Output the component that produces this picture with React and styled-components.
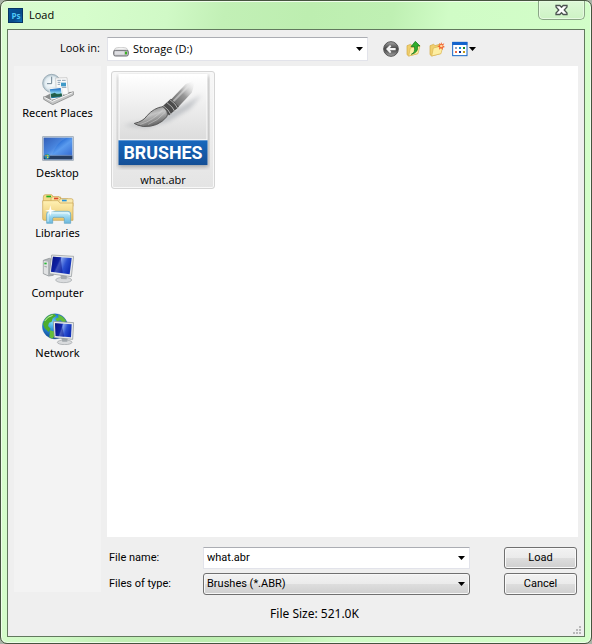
import React, { useState } from "react";
import styled, { createGlobalStyle } from "styled-components";

const GlobalStyle = createGlobalStyle`
  *, *::before, *::after { box-sizing: border-box; }
  body {
    margin: 0;
    background: #a9b3a7;
    font: 11px/16px "Open Sans", "Noto Sans", sans-serif;
    color: #000;
  }
  button, input, select { font: inherit; color: inherit; margin: 0; }
`;

const Window = styled.div`
  min-height: 100vh;
  display: flex;
  flex-direction: column;
  padding: 0 6px 6px;
  border: 1px solid #46543f;
  border-radius: 7px;
  background: linear-gradient(100deg, #d9fbd0 0%, #d6fdcc 12%, #d0f9c6 24%, #c2f0b6 32%, #bdeeb0 44%, #bff0b3 56%, #d0fcc6 64%, #d4ffca 100%);
  box-shadow: inset 0 0 0 1px #effdeb;
`;

const TitleBar = styled.header`
  display: flex;
  align-items: flex-start;
  height: 28px;
`;

const TitleLabel = styled.h1`
  flex: 1;
  display: flex;
  gap: 6px;
  align-items: center;
  margin: 0;
  padding: 6px 0 0 1px;
  font-size: 11px;
  line-height: 16px;
  font-weight: 400;
`;

const CloseButton = styled.button`
  width: 47px;
  height: 19px;
  padding: 0;
  display: grid;
  place-items: center;
  border: 1px solid #8aa586;
  border-top: 0;
  border-radius: 0 0 5px 5px;
  background: linear-gradient(#ddf8d7, #cdf3c4);
  box-shadow: inset 0 0 0 1px #e6fbe1;
`;

const Client = styled.main`
  flex: 1;
  display: grid;
  grid-template-columns: 87px minmax(0, 1fr);
  grid-template-rows: 36px minmax(0, 1fr) auto;
  column-gap: 6px;
  padding: 0 6px;
  border: 1px solid #62795e;
  background: #efefef;
`;

const LookLabel = styled.label`
  align-self: center;
  text-align: right;
  padding-right: 1px;
`;

const Toolbar = styled.div`
  display: flex;
  align-items: center;
  padding: 3px 0 1px;
`;

const ComboBox = styled.div`
  position: relative;
  display: flex;
  flex: 1;
  min-width: 0;
  height: ${(p) => p.$height || 22}px;
`;

const ComboSelect = styled.select`
  appearance: none;
  width: 100%;
  border: 1px solid #e2e3ea;
  border-top-color: #abadb3;
  border-radius: 0;
  padding: 0 20px 0 25px;
  background: #fff;
`;

const TypeSelect = styled(ComboSelect)`
  padding: 0 20px 0 3px;
  border: 1px solid #707070;
  border-radius: 3px;
  background: linear-gradient(#f2f2f2, #ebebeb 48%, #dddddd 52%, #cfcfcf);
  box-shadow: inset 0 0 0 1px #f7f7f7;
`;

const NameInput = styled.input`
  width: 100%;
  border: 1px solid #e2e3ea;
  border-top-color: #abadb3;
  padding: 0 20px 0 3px;
  background: #fff;
`;

const LeadIcon = styled.span`
  position: absolute;
  left: 6px;
  top: 10px;
  line-height: 0;
  pointer-events: none;
`;

const ArrowSlot = styled.span`
  position: absolute;
  right: 5px;
  top: 0;
  bottom: 0;
  display: flex;
  align-items: center;
  pointer-events: none;
`;

const Tools = styled.div`
  display: flex;
  gap: 7px;
  padding: 0 102px 0 15px;
`;

const ToolButton = styled.button`
  display: flex;
  align-items: center;
  gap: 1px;
  padding: 0;
  border: 0;
  background: none;
`;

const Places = styled.nav`
  grid-row: 2 / 4;
  margin-bottom: 44px;
  padding-top: 7px;
  background: #f3f3f3;
  display: flex;
  flex-direction: column;
  font-family: "Noto Sans", "Open Sans", sans-serif;
`;

const Place = styled.button`
  height: 60px;
  padding: 0;
  border: 0;
  background: none;
  display: flex;
  flex-direction: column;
  align-items: center;
  white-space: nowrap;
`;

const FileList = styled.section`
  background: #fff;
  padding: 5px 4px;
`;

const FileCard = styled.button`
  width: 104px;
  height: 118px;
  display: flex;
  flex-direction: column;
  align-items: center;
  gap: 2px;
  padding: 1px 0 0;
  border: 1px solid #d5d5d5;
  border-radius: 3px;
  background: linear-gradient(#f8f8f8, #e4e4e4);
  box-shadow: inset 0 0 0 1px #f8f8f8;
`;

const Form = styled.form`
  display: grid;
  grid-template-columns: 94px minmax(0, 1fr) 73px;
  grid-template-rows: 22px 22px;
  row-gap: 4px;
  align-items: center;
  padding: 10px 1px 0 2px;
  font-family: Roboto, "Liberation Sans", sans-serif;
`;

const Field = styled.div`
  display: flex;
  margin-right: 34px;
`;

const PushButton = styled.button`
  height: 22px;
  padding: 0;
  border: 1px solid #707070;
  border-radius: 3px;
  background: linear-gradient(#f2f2f2, #ebebeb 48%, #dddddd 52%, #cfcfcf);
  box-shadow: inset 0 0 0 1px #fafafa;
`;

const Status = styled.footer`
  grid-column: 1 / 4;
  height: 37px;
  display: flex;
  align-items: flex-start;
  font: 12px/16px "Noto Sans", "Open Sans", sans-serif;
`;

const FileSize = styled.output`
  flex: 1;
  padding: 7px 53px 0 0;
  text-align: center;
`;

const Grip = styled.span`
  align-self: flex-end;
  margin: 0 -5px 1px 0;
  line-height: 0;
`;

const Arrow = () => (
  <svg width="7" height="4" aria-hidden="true"><path d="M0 0H7L3.5 4Z" fill="#000" /></svg>
);

const PsIcon = () => (
  <svg width="15" height="15" viewBox="0 0 15 15" aria-hidden="true">
    <defs>
      <linearGradient id="ps" x2="1" y2="1"><stop stopColor="#07559b" /><stop offset=".6" stopColor="#074a89" /><stop offset="1" stopColor="#0d70b8" /></linearGradient>
    </defs>
    <rect width="15" height="15" fill="#063463" />
    <rect x="1" y="1" width="13" height="13" fill="url(#ps)" />
    <text x="8" y="11" textAnchor="middle" fontFamily="Open Sans, sans-serif" fontSize="8" fontWeight="700" fill="#4fc9f7">Ps</text>
  </svg>
);

const CloseIcon = () => (
  <svg width="13" height="12" viewBox="0 0 13 12" aria-hidden="true">
    <path d="M1 1.500H4.8L6.5 3.300L8.200 1.500H12V3L9.200 6L12 9V10.500H8.200L6.500 8.700L4.800 10.500H1V9L3.800 6L1 3Z" fill="#fff" stroke="#4b5450" strokeWidth="1.300" />
  </svg>
);

const DriveIcon = () => (
  <svg width="16" height="10" viewBox="0 0 48 30" aria-hidden="true">
    <path d="M8 3Q24 -2 40 3L46 11H2Z" fill="#f5f5f5" stroke="#b9b9b9" strokeWidth="2" />
    <rect x="2" y="10" width="44" height="17" rx="5" fill="#bfc0c4" stroke="#717176" strokeWidth="3" />
    <rect x="6" y="13" width="27" height="10" fill="#dedee2" />
    <rect x="36" y="14" width="6" height="8" fill="#3bb321" />
  </svg>
);

const BackIcon = () => (
  <svg width="16" height="16" viewBox="0 0 48 48" aria-hidden="true">
    <defs><linearGradient id="bk" x2="0" y2="1"><stop stopColor="#a8a8a8" /><stop offset=".45" stopColor="#4a4a4a" /><stop offset=".6" stopColor="#555" /><stop offset="1" stopColor="#a4a4a4" /></linearGradient></defs>
    <circle cx="24" cy="24" r="22" fill="url(#bk)" stroke="#555" strokeWidth="3" />
    <path d="M9 24L21 12L25 16L21 21H38V28H21L25 33L21 37Z" fill="#f4f4f4" />
  </svg>
);

const FolderShape = () => (
  <>
    <path d="M3 14L14 10L18 14L34 9V38L8 45L3 41Z" fill="#f0cf6d" stroke="#d0a740" strokeWidth="2" />
    <path d="M13 21L42 14L36 38L8 45Z" fill="#fdeea2" stroke="#d9b352" strokeWidth="2" />
  </>
);

const UpIcon = () => (
  <svg width="16" height="16" viewBox="0 0 48 48" aria-hidden="true">
    <FolderShape />
    <path d="M16 40Q29 34 25 17H15L28 1L42 15H34Q39 34 16 40Z" fill="#2fae2c" stroke="#126f19" strokeWidth="2" />
  </svg>
);

const NewFolderIcon = () => (
  <svg width="16" height="16" viewBox="0 0 48 48" aria-hidden="true">
    <FolderShape />
    <path d="M37 3L39 10L46 7L42 14L48 18L41 20L42 27L36 22L30 26L31 19L25 16L32 13L30 6L35 10Z" fill="#f2622e" />
    <circle cx="37" cy="15" r="4" fill="#ffd9a0" />
  </svg>
);

const ViewIcon = () => (
  <svg width="16" height="16" viewBox="0 0 48 48" aria-hidden="true">
    <rect x="2" y="4" width="43" height="40" fill="#fff" stroke="#1466c7" strokeWidth="3" />
    <rect x="1" y="3" width="45" height="9" fill="#1263cd" />
    <rect x="9" y="18" width="6" height="6" fill="#91a0bd" /><rect x="21" y="18" width="6" height="6" fill="#1489cf" /><rect x="33" y="18" width="6" height="6" fill="#158a29" />
    <rect x="9" y="30" width="6" height="6" fill="#ed6b44" /><rect x="21" y="30" width="6" height="6" fill="#0b3097" /><rect x="33" y="30" width="6" height="6" fill="#c49a19" />
  </svg>
);

const PlaceSvg = ({ children }) => (
  <svg width="32" height="32" viewBox="0 0 96 96" aria-hidden="true">{children}</svg>
);

const RecentIcon = () => (
  <PlaceSvg>
    <defs>
      <linearGradient id="rp" x2="0" y2="1"><stop stopColor="#1263bd" /><stop offset=".5" stopColor="#8ed6f4" /><stop offset=".62" stopColor="#2c7d5c" /><stop offset="1" stopColor="#1975b0" /></linearGradient>
      <radialGradient id="rc"><stop stopColor="#fff" /><stop offset=".72" stopColor="#e3edf2" /><stop offset="1" stopColor="#a9bbc5" /></radialGradient>
    </defs>
    <path d="M5 72L28 60L94 56V65L32 95L5 79Z" fill="#8c8e8e" />
    <circle cx="29" cy="31" r="27" fill="url(#rc)" stroke="#9fb0ba" strokeWidth="3" />
    <path d="M29 11V32H15" fill="none" stroke="#6c8290" strokeWidth="3" />
    <path d="M41 15L75 14L80 68L43 60Z" fill="#fafafa" stroke="#bdbdbd" strokeWidth="2" />
    <path d="M46 22H57M60 22H71M47 28H55M47 34H54M60 43H73" stroke="#8ca0b2" strokeWidth="3" />
    <rect x="57" y="29" width="15" height="11" fill="#4099c8" />
    <path d="M21 46L59 42L64 75L27 80Z" fill="#fff" stroke="#bdc7cc" strokeWidth="1" />
    <path d="M23 49L56 45L61 72L28 76Z" fill="url(#rp)" />
    <path d="M27 64L38 59L47 65L58 61L60 69L28 73Z" fill="#235e49" />
    <path d="M5 71L30 83L94 56V66L32 95L5 79Z" fill="#c4c5c5" stroke="#858787" strokeWidth="2" />
    <path d="M7 73L31 85L92 59" fill="none" stroke="#f8f8f8" strokeWidth="3" />
  </PlaceSvg>
);

const DesktopIcon = () => (
  <PlaceSvg>
    <defs><linearGradient id="dk" x2="1" y2="1"><stop stopColor="#1c4db0" /><stop offset=".4" stopColor="#3478db" /><stop offset=".55" stopColor="#5a9bee" /><stop offset="1" stopColor="#2b5fcb" /></linearGradient></defs>
    <rect x="2" y="11" width="92" height="71" fill="#d0d8df" stroke="#8d9baa" strokeWidth="2" />
    <rect x="5" y="14" width="86" height="65" fill="url(#dk)" />
    <path d="M5 14H75Q42 28 30 66H5Z" fill="#fff" opacity=".1" />
    <rect x="5" y="68" width="86" height="11" fill="#263d60" />
    <path d="M5 67H91" stroke="#8699b5" strokeWidth="2" />
    <circle cx="15" cy="70" r="8" fill="#218dad" />
    <path d="M10 70V66L14 65V70Z" fill="#ef7646" /><path d="M15 65L20 66V70H15Z" fill="#a5de56" /><path d="M15 71H20L18 76L15 75Z" fill="#f5d949" />
  </PlaceSvg>
);

const LibrariesIcon = () => (
  <PlaceSvg>
    <defs>
      <linearGradient id="lf" x2="0" y2="1"><stop stopColor="#fff1b4" /><stop offset="1" stopColor="#e9c56a" /></linearGradient>
      <linearGradient id="lb" x2="0" y2="1"><stop stopColor="#d7f4fc" /><stop offset=".5" stopColor="#93d3ed" /><stop offset="1" stopColor="#6cb7dc" /></linearGradient>
    </defs>
    <path d="M4 12Q4 5 10 5H29L35 12H56V30H4Z" fill="#f4da8a" stroke="#c7a14e" strokeWidth="2" />
    <rect x="13" y="8" width="14" height="5" fill="#1eb01c" />
    <path d="M27 17Q28 11 34 11H51L57 18H78V34H27Z" fill="#f9e5a3" stroke="#c7a14e" strokeWidth="2" />
    <rect x="36" y="14" width="13" height="5" fill="#dd4727" />
    <path d="M50 24Q52 17 58 17H88Q93 17 93 22V40H50Z" fill="#fae9ae" stroke="#c7a14e" strokeWidth="2" />
    <rect x="60" y="20" width="14" height="5" fill="#2691d8" />
    <path d="M2 23H48L54 30H93V82H7Q2 82 2 77Z" fill="url(#lf)" stroke="#c7a14e" strokeWidth="2" />
    <path d="M14 91V63Q14 55 22 55H78Q86 55 86 63V91H67V77Q67 73 63 73H36Q32 73 32 77V91Z" fill="url(#lb)" stroke="#5ca1c4" strokeWidth="2" />
    <path d="M18 86V66Q18 60 24 60H76Q82 60 82 66" fill="none" stroke="#f1fcff" strokeWidth="3" opacity=".8" />
    <path d="M25 37L28 50L41 53L28 56L25 69L22 56L9 53L22 50Z" fill="#fff" />
  </PlaceSvg>
);

const ComputerIcon = () => (
  <PlaceSvg>
    <defs><linearGradient id="sc" x2="1" y2=".4"><stop stopColor="#050e72" /><stop offset=".4" stopColor="#1736c5" /><stop offset=".48" stopColor="#7f9eee" /><stop offset=".75" stopColor="#2a4fd0" /><stop offset="1" stopColor="#1231b8" /></linearGradient></defs>
    <path d="M4 22L22 16L34 21V67L20 69L4 62Z" fill="#b1b5b8" stroke="#83898c" strokeWidth="2" />
    <path d="M5 23L18 26V67L5 61Z" fill="#e0e2e3" /><rect x="7" y="29" width="7" height="5" fill="#26b832" /><path d="M7 40L15 42" stroke="#84898b" strokeWidth="2" />
    <ellipse cx="65" cy="81" rx="24" ry="8" fill="#d9dbdd" stroke="#a2a6a9" strokeWidth="2" />
    <path d="M55 64L75 66L74 79L57 78Z" fill="#a5aaae" />
    <path d="M29 6L95 10L88 71L22 62Z" fill="#e6e8e9" stroke="#8c9296" strokeWidth="2" />
    <path d="M33 11L89 15L83 64L27 56Z" fill="url(#sc)" />
    <path d="M33 11L56 13L62 60L27 56Z" fill="#0a138a" opacity=".55" />
  </PlaceSvg>
);

const NetworkIcon = () => (
  <PlaceSvg>
    <defs>
      <radialGradient id="gl" cx=".38" cy=".35" r=".65"><stop stopColor="#79d7f7" /><stop offset=".5" stopColor="#2386d6" /><stop offset="1" stopColor="#104291" /></radialGradient>
      <linearGradient id="sn" x2="1" y2=".3"><stop stopColor="#050e72" /><stop offset=".42" stopColor="#1736c5" /><stop offset=".5" stopColor="#86a6ee" /><stop offset=".75" stopColor="#2a4fd0" /><stop offset="1" stopColor="#1231b8" /></linearGradient>
    </defs>
    <circle cx="39" cy="40" r="38" fill="url(#gl)" stroke="#2366a3" strokeWidth="1" />
    <path d="M9 18Q20 3 37 3L43 8L32 16L29 26L21 29L18 39L26 47L20 57L8 46L3 33Z" fill="#4dac2d" />
    <path d="M48 5Q66 10 73 25L63 28L55 22L45 25L40 18L50 13ZM24 52L35 55L40 64L32 77L22 73Z" fill="#63be38" />
    <path d="M8 24Q17 10 32 7" fill="none" stroke="#c5efaa" strokeWidth="3" />
    <ellipse cx="68" cy="88" rx="22" ry="7" fill="#d9dbdd" stroke="#9a9fa2" strokeWidth="2" />
    <path d="M58 74H77L76 86H61Z" fill="#a2a8ac" />
    <path d="M34 25L95 29L92 79L37 74Z" fill="#e7e9ea" stroke="#858c90" strokeWidth="2" />
    <path d="M39 31L89 34L87 73L41 69Z" fill="url(#sn)" />
    <path d="M39 31L59 33L67 71L41 69Z" fill="#0a138a" opacity=".5" />
  </PlaceSvg>
);

const BrushFileIcon = () => (
  <svg width="94" height="98" viewBox="0 0 94 98" aria-hidden="true">
    <defs>
      <linearGradient id="pg" x2="0" y2="1"><stop stopColor="#fff" /><stop offset="1" stopColor="#dcdcdc" /></linearGradient>
      <linearGradient id="bb" x2="0" y2="1"><stop stopColor="#1767bd" /><stop offset="1" stopColor="#144f96" /></linearGradient>
      <linearGradient id="hd" gradientUnits="userSpaceOnUse" x1="54" y1="37" x2="80" y2="11"><stop stopColor="#515151" /><stop offset=".55" stopColor="#999" /><stop offset="1" stopColor="#e6e6e6" stopOpacity="0" /></linearGradient>
      <linearGradient id="br" x1=".2" x2=".7" y2="1"><stop stopColor="#666" /><stop offset=".45" stopColor="#c5c5c5" /><stop offset="1" stopColor="#505050" /></linearGradient>
      <filter id="soft" x="-.3" y="-.3" width="1.6" height="1.6"><feGaussianBlur stdDeviation="2" /></filter>
    </defs>
    <rect x="2" y="3" width="91" height="92" fill="#777" filter="url(#soft)" opacity=".6" />
    <rect x="2" y="1" width="90" height="92" fill="#fff" />
    <rect x="3" y="2" width="88" height="65" fill="url(#pg)" />
    <path d="M7 53Q26 49 40 50L58 38L86 22L74 36L52 49L30 55Z" fill="#6f7782" opacity=".35" filter="url(#soft)" />
    <path d="M53 29L70 11L80 7L76 20L60 37Z" fill="url(#hd)" />
    <path d="M55 31L74 12" stroke="#e8e8e8" strokeWidth="2" opacity=".5" />
    <path d="M46 34L55 26L63 34L53 43Z" fill="#4b4b4b" />
    <path d="M47 33Q53 37 55 42M51 30Q57 34 59 39M54 27Q60 31 62 36" fill="none" stroke="#b1b1b1" strokeWidth="1" />
    <path d="M18 51Q27 49 31 43Q38 35 47 34Q53 39 51 44Q42 55 27 54Q21 53 18 51Z" fill="url(#br)" stroke="#555" strokeWidth="1" />
    <path d="M24 52Q37 48 47 37M32 52Q42 48 49 40" fill="none" stroke="#e5e5e5" strokeWidth="1" opacity=".4" />
    <rect x="2" y="68" width="90" height="25" fill="url(#bb)" />
    <text x="47" y="87" textAnchor="middle" fontFamily="Roboto, Noto Sans, sans-serif" fontSize="18" fontWeight="700" fill="#fff">BRUSHES</text>
  </svg>
);

const GripIcon = () => (
  <svg width="9" height="9" viewBox="0 0 9 9" aria-hidden="true">
    <path d="M6 0H8V2H6ZM3 3H5V5H3ZM6 3H8V5H6ZM0 6H2V8H0ZM3 6H5V8H3ZM6 6H8V8H6Z" fill="#b9b9b9" />
  </svg>
);

const places = [
  { name: "Recent Places", Icon: RecentIcon },
  { name: "Desktop", Icon: DesktopIcon },
  { name: "Libraries", Icon: LibrariesIcon },
  { name: "Computer", Icon: ComputerIcon },
  { name: "Network", Icon: NetworkIcon },
];

export default function App() {
  const [fileName, setFileName] = useState("what.abr");
  return (
    <>
      <GlobalStyle />
      <Window>
        <TitleBar>
          <TitleLabel><PsIcon />Load</TitleLabel>
          <CloseButton aria-label="Close"><CloseIcon /></CloseButton>
        </TitleBar>
        <Client>
          <LookLabel htmlFor="look-in">Look in:</LookLabel>
          <Toolbar>
            <ComboBox $height={24}>
              <ComboSelect id="look-in"><option>Storage (D:)</option></ComboSelect>
              <LeadIcon><DriveIcon /></LeadIcon>
              <ArrowSlot><Arrow /></ArrowSlot>
            </ComboBox>
            <Tools>
              <ToolButton aria-label="Back"><BackIcon /></ToolButton>
              <ToolButton aria-label="Up one level"><UpIcon /></ToolButton>
              <ToolButton aria-label="New folder"><NewFolderIcon /></ToolButton>
              <ToolButton aria-label="Views"><ViewIcon /><Arrow /></ToolButton>
            </Tools>
          </Toolbar>
          <Places aria-label="Places">
            {places.map(({ name, Icon }) => (
              <Place key={name}><Icon />{name}</Place>
            ))}
          </Places>
          <FileList aria-label="Files">
            <FileCard onClick={() => setFileName("what.abr")}><BrushFileIcon />what.abr</FileCard>
          </FileList>
          <Form onSubmit={(e) => e.preventDefault()}>
            <label htmlFor="file-name">File name:</label>
            <Field>
              <ComboBox>
                <NameInput id="file-name" value={fileName} onChange={(e) => setFileName(e.target.value)} />
                <ArrowSlot><Arrow /></ArrowSlot>
              </ComboBox>
            </Field>
            <PushButton type="submit">Load</PushButton>
            <label htmlFor="file-type">Files of type:</label>
            <Field>
              <ComboBox>
                <TypeSelect id="file-type"><option>Brushes (*.ABR)</option></TypeSelect>
                <ArrowSlot><Arrow /></ArrowSlot>
              </ComboBox>
            </Field>
            <PushButton type="button">Cancel</PushButton>
            <Status>
              <FileSize>File Size: 521.0K</FileSize>
              <Grip><GripIcon /></Grip>
            </Status>
          </Form>
        </Client>
      </Window>
    </>
  );
}
